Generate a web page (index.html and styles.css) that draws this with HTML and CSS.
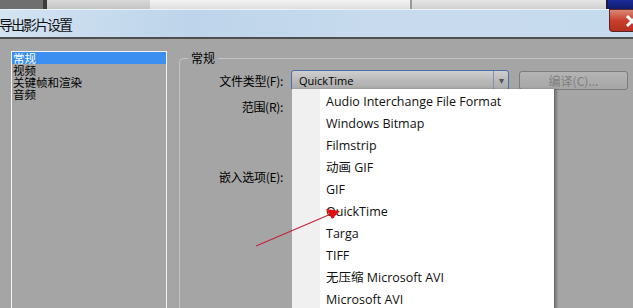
FILE: index.html
```
<!DOCTYPE html>
<html lang="zh-CN">

<head>
    <meta charset="UTF-8">
    <title>导出影片设置</title>
    <link rel="stylesheet" href="styles.css">
</head>

<body>

    <div class="screen">
        <div class="behind">
            <div class="behind-a"></div>
            <div class="behind-b"></div>
            <div class="behind-c"></div>
            <div class="behind-d"></div>
            <div class="behind-e"></div>
        </div>

        <div class="titlebar">
            <span class="title">导出影片设置</span>
            <div class="close">
                <svg width="24" height="22" viewBox="0 0 24 22">
                    <path d="M17 6 L27 16 M27 6 L17 16" stroke="#fff" stroke-width="3" />
                </svg>
            </div>
        </div>

        <div class="dialog">
            <ul class="nav">
                <li class="active">常规</li>
                <li>视频</li>
                <li>关键帧和渲染</li>
                <li>音频</li>
            </ul>

            <div class="group">
                <div class="legend">常规</div>
                <div class="row">
                    <span class="label">文件类型(F):</span>
                    <div class="combo">
                        <span>QuickTime</span>
                        <div class="combo-btn">▾</div>
                    </div>
                    <div class="btn">编译(C)...</div>
                </div>
                <div class="row row-range">
                    <span class="label">范围(R):</span>
                </div>
                <div class="row row-embed">
                    <span class="label">嵌入选项(E):</span>
                </div>
            </div>
        </div>

        <!-- 下拉列表 -->
        <ul class="dropdown">
            <li>Audio Interchange File Format</li>
            <li>Windows Bitmap</li>
            <li>Filmstrip</li>
            <li>动画 GIF</li>
            <li>GIF</li>
            <li>QuickTime</li>
            <li>Targa</li>
            <li>TIFF</li>
            <li>无压缩 Microsoft AVI</li>
            <li>Microsoft AVI</li>
        </ul>

        <svg class="arrow" width="633" height="308" viewBox="0 0 633 308">
            <line x1="256" y1="246" x2="331" y2="214" stroke="#c0283a" stroke-width="1.2" />
            <polygon points="326,209 340,211 332,219" fill="#e01010" />
        </svg>
    </div>

</body>

</html>
```

FILE: styles.css
```
body {
    margin: 0;
    padding: 0;
    background-color: #a5a5a5;
    font-family: 'Noto Sans CJK SC', sans-serif;
    font-size: 12px;
    overflow: hidden;
}

.screen {
    position: relative;
    width: 633px;
    height: 308px;
    overflow: hidden;
}

/* 后面的窗口 */
.behind {
    display: flex;
    height: 9px;
}

.behind-a {
    width: 43px;
    background-color: #6f6f6f;
    border-right: 4px solid #3b3b3b;
}

.behind-b {
    width: 103px;
    background: linear-gradient(#d9d9d9, #c4c4c4);
}

.behind-c {
    width: 260px;
    background: linear-gradient(#f4f4f4, #dedede);
    border-right: 2px solid #9a9a9a;
}

.behind-d {
    flex: 1;
    background: linear-gradient(#e6e6e6, #d0d0d0);
    border-right: 2px solid #1c1c3a;
}

.behind-e {
    width: 25px;
    background: linear-gradient(#1c2a9a, #101c6c);
}

.titlebar {
    display: flex;
    align-items: center;
    justify-content: space-between;
    height: 27px;
    background: linear-gradient(90deg, #d3e3f2 0%, #bdd4ea 30%, #c8dbee 60%, #c6daee 100%);
    border-bottom: 2px solid #4e4e4e;
    border-top: 1px solid #eaf2fa;
}

.title {
    font-size: 14px;
    color: #111;
    margin-left: -1px;
    letter-spacing: -2px;
}

.close {
    width: 24px;
    height: 23px;
    align-self: flex-start;
    margin-top: -1px;
    background: linear-gradient(#d98878, #c8402c 50%, #b43020);
    border: 1px solid #5a2424;
    border-right: none;
    border-radius: 0 0 0 4px;
    box-sizing: border-box;
    overflow: hidden;
}

.close svg {
    display: block;
}

.dialog {
    display: flex;
    padding: 12px 0 0 11px;
    height: 260px;
}

.nav {
    list-style: none;
    margin: 0;
    padding: 0;
    width: 154px;
    border: 1px solid #f4f4f4;
    border-bottom: none;
    font-size: 11.5px;
    line-height: 12px;
}

.nav li {
    padding-left: 1px;
    height: 12px;
    color: #000;
}

.nav .active {
    background-color: #3a8ff0;
    color: #fff;
}

.group {
    position: relative;
    margin-left: 12px;
    margin-top: 7px;
    flex: 1;
    border: 1px solid #c4c4c4;
    border-right: none;
    border-bottom: none;
    border-radius: 5px 0 0 0;
    padding-top: 10px;
}

.legend {
    position: absolute;
    top: -9px;
    left: 8px;
    padding: 0 3px;
    background-color: #a5a5a5;
    font-size: 12px;
    line-height: 16px;
}

.row {
    display: flex;
    align-items: center;
    height: 22px;
}

.label {
    width: 106px;
    text-align: right;
    color: #000;
    font-size: 12px;
    letter-spacing: -0.3px;
    padding-right: 3px;
    box-sizing: border-box;
}

.combo {
    display: flex;
    align-items: center;
    justify-content: space-between;
    margin-left: 5px;
    width: 216px;
    height: 19px;
    border: 1px solid #4a6ea8;
    border-radius: 3px;
    background: linear-gradient(#cfcfcf, #b9b9b9 50%, #a9a9a9);
    font-family: 'Open Sans', sans-serif;
    font-size: 11px;
    color: #000;
}

.combo span {
    padding-left: 7px;
}

.combo-btn {
    width: 14px;
    height: 19px;
    border-left: 1px solid #8090a8;
    color: #555;
    font-size: 10px;
    line-height: 19px;
    text-align: center;
}

.btn {
    margin-left: 10px;
    width: 107px;
    height: 17px;
    border: 1px solid #7c7c7c;
    border-radius: 3px;
    background: linear-gradient(#b4b4b4, #a6a6a6);
    color: #7e7e7e;
    font-size: 12px;
    line-height: 17px;
    text-align: center;
}

.row-range {
    margin-top: 4px;
}

.row-embed {
    margin-top: 48px;
}

.dropdown {
    position: absolute;
    left: 292px;
    top: 89px;
    width: 263px;
    height: 230px;
    margin: 0;
    padding: 2px 0 0 34px;
    box-sizing: border-box;
    list-style: none;
    background: linear-gradient(90deg, #f0f0f0 28px, #ffffff 28px);
    border-right: 1px solid #6c6c6c;
    box-shadow: 2px 0 2px rgba(0, 0, 0, 0.25);
    font-family: 'Open Sans', 'Noto Sans CJK SC', sans-serif;
    font-size: 12.5px;
    color: #111;
}

.dropdown li {
    height: 22px;
    line-height: 22px;
}

.arrow {
    position: absolute;
    left: 0;
    top: 0;
}
```
